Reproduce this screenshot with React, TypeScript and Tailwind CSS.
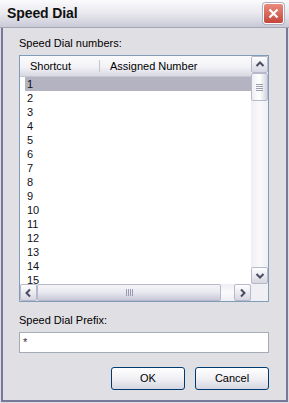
import React from "react"

const rows = Array.from({ length: 15 }, (_, i) => String(i + 1))

function ArrowBtn({ dir }: { dir: "up" | "down" | "left" | "right" }) {
  const paths: Record<string, string> = {
    up: "M1.5 6 L5 2.5 L8.5 6",
    down: "M1.5 3 L5 6.5 L8.5 3",
    left: "M6 1.5 L2.5 5 L6 8.5",
    right: "M3 1.5 L6.5 5 L3 8.5",
  }
  return (
    <div className="w-[17px] h-[17px] flex items-center justify-center rounded-[2px] border border-[#b8b8cc] bg-gradient-to-b from-[#ffffff] to-[#d6d6e2]">
      <svg width="10" height="10" viewBox="0 0 10 10">
        <path d={paths[dir]} fill="none" stroke="#4a4a60" strokeWidth="2" />
      </svg>
    </div>
  )
}

export default function App() {
  return (
    <div className="w-[289px] h-[403px] bg-[#dcdce4] font-['Liberation_Sans',sans-serif] text-[11px] text-black flex flex-col">
      {/* title bar */}
      <div className="h-[28px] shrink-0 flex items-center justify-between pl-[7px] pr-[5px] bg-gradient-to-b from-[#fbfbfd] via-[#e8e8ee] to-[#cacad8] border-b border-[#a4a4b6]">
        <span className="text-[14px] font-bold tracking-[-0.1px] text-[#101010]">Speed Dial</span>
        <div className="w-[21px] h-[21px] rounded-[3px] border border-white bg-gradient-to-b from-[#e98a7e] to-[#c4453b] flex items-center justify-center shadow-[0_0_0_1px_#b0b0c0]">
          <svg width="11" height="11" viewBox="0 0 11 11">
            <path d="M1.5 1.5 L9.5 9.5 M9.5 1.5 L1.5 9.5" stroke="white" strokeWidth="2.2" />
          </svg>
        </div>
      </div>

      {/* frame */}
      <div className="flex-1 px-[1px] pb-[1px] flex">
        <div className="flex-1 border-l-2 border-r-2 border-b-2 border-[#78789a] bg-[#e0dfe3] flex flex-col pl-[16px] pr-[16px]">
          <div className="mt-[9px] h-[13px] leading-[13px]">Speed Dial numbers:</div>

          {/* list view */}
          <div className="mt-[5px] w-[250px] h-[247px] border border-[#7f9db9] bg-white grid grid-cols-[1fr_17px] grid-rows-[1fr_17px]">
            <div className="overflow-hidden flex flex-col">
              <div className="h-[21px] shrink-0 flex items-center bg-gradient-to-b from-[#fafafc] via-[#f4f4f8] to-[#d8d8e2] border-b border-[#c8c8d4]">
                <span className="w-[79px] pl-[10px]">Shortcut</span>
                <span className="w-px h-[12px] bg-[#c4c4cc]" />
                <span className="pl-[10px]">Assigned Number</span>
              </div>
              {rows.map((r, i) => (
                <div
                  key={r}
                  className={`h-[14px] shrink-0 leading-[14px] ml-[5px] pl-[2px] text-[#101018] ${i === 0 ? "bg-[#b3b3c2]" : ""}`}
                >
                  {r}
                </div>
              ))}
            </div>

            {/* vertical scrollbar */}
            <div className="flex flex-col bg-gradient-to-r from-[#eeeef4] via-[#fafafc] to-[#eeeef4]">
              <ArrowBtn dir="up" />
              <div className="h-[28px] w-[17px] rounded-[2px] border border-[#b8b8cc] bg-gradient-to-r from-[#eeeef4] via-[#ffffff] to-[#d4d4e0] flex flex-col items-center justify-center gap-[1px]">
                <span className="w-[7px] h-px bg-[#9a9ab0]" />
                <span className="w-[7px] h-px bg-[#9a9ab0]" />
                <span className="w-[7px] h-px bg-[#9a9ab0]" />
                <span className="w-[7px] h-px bg-[#9a9ab0]" />
              </div>
              <div className="flex-1" />
              <ArrowBtn dir="down" />
            </div>

            {/* horizontal scrollbar */}
            <div className="flex bg-gradient-to-b from-[#eeeef4] via-[#fafafc] to-[#eeeef4]">
              <ArrowBtn dir="left" />
              <div className="w-[184px] h-[17px] rounded-[2px] border border-[#b8b8cc] bg-gradient-to-b from-[#f4f4f8] via-[#e8e8f0] to-[#c8c8d8] flex items-center justify-center gap-[1px]">
                <span className="h-[7px] w-px bg-[#9a9ab0]" />
                <span className="h-[7px] w-px bg-[#9a9ab0]" />
                <span className="h-[7px] w-px bg-[#9a9ab0]" />
                <span className="h-[7px] w-px bg-[#9a9ab0]" />
              </div>
              <div className="flex-1" />
              <ArrowBtn dir="right" />
            </div>
            <div className="bg-[#f0f0f4]" />
          </div>

          <div className="mt-[12px] h-[13px] leading-[13px]">Speed Dial Prefix:</div>
          <div className="mt-[5px] w-[250px] h-[21px] border border-[#a5acb5] bg-white flex items-center pl-[3px]">
            <span className="text-[#3a3030]">*</span>
          </div>

          <div className="mt-[14px] flex justify-end gap-[10px] w-[250px]">
            <button className="w-[74px] h-[23px] rounded-[3px] border border-[#003c74] bg-gradient-to-b from-[#ffffff] via-[#f0f0f4] to-[#d6d6e2] text-[11px] font-['Liberation_Sans',sans-serif]">
              OK
            </button>
            <button className="w-[74px] h-[23px] rounded-[3px] border border-[#003c74] bg-gradient-to-b from-[#ffffff] via-[#f0f0f4] to-[#d6d6e2] text-[11px] font-['Liberation_Sans',sans-serif]">
              Cancel
            </button>
          </div>
        </div>
      </div>
    </div>
  )
}
